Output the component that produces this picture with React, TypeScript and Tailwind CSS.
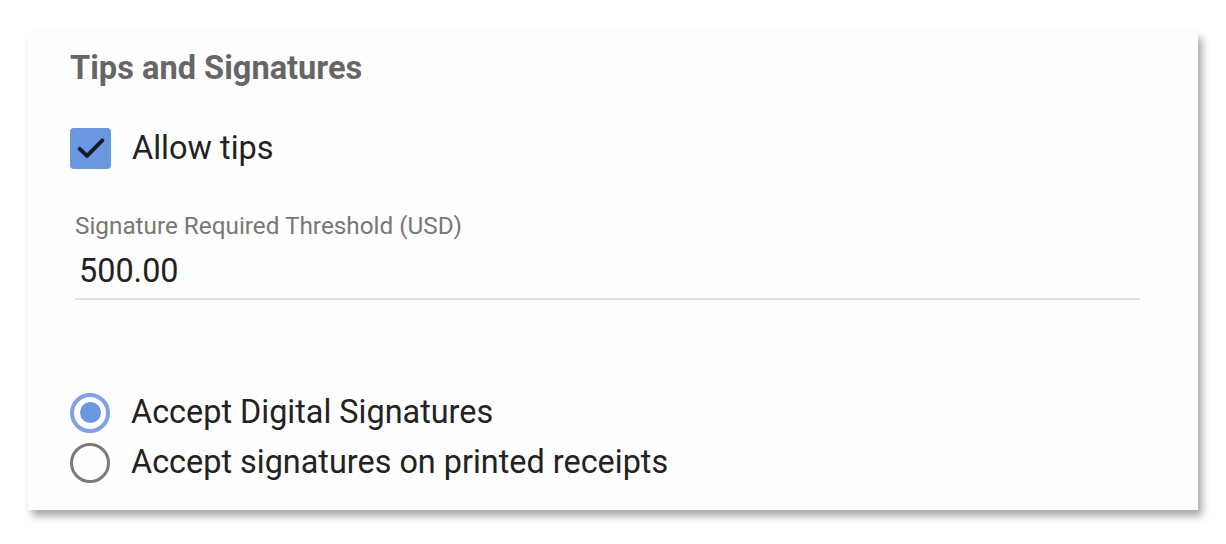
import React from 'react'

const Radio = ({ checked, label }: { checked?: boolean; label: string }) => (
  <label className="flex items-center gap-[21px] h-[50px]">
    <span
      className={
        checked
          ? 'flex items-center justify-center w-[40px] h-[40px] rounded-full border-[4px] border-[#7fa3e2]'
          : 'flex items-center justify-center w-[40px] h-[40px] rounded-full border-[3px] border-[#7a7a7a]'
      }
    >
      {checked && <span className="block w-[21px] h-[21px] rounded-full bg-[#6b97df]" />}
    </span>
    <span className="text-[32.4px] text-[#222]">{label}</span>
  </label>
)

export default function App() {
  return (
    <div className="w-[1226px] h-[544px] bg-white pt-[32px] pl-[28px] font-['Roboto',sans-serif]">
      <div className="w-[1170px] h-[478px] bg-[#fefefe] shadow-[4px_6px_8px_rgba(0,0,0,0.35)] pl-[42px] pt-[16px]">
        {/* section title */}
        <h2 className="text-[32.6px] leading-[40px] font-bold text-[#666]">Tips and Signatures</h2>

        <label className="flex items-center gap-[21px] mt-[36px]">
          <span className="flex items-center justify-center w-[41px] h-[41px] rounded-[4px] bg-[#6b97df]">
            <svg width="34" height="34" viewBox="0 0 24 24" fill="none">
              <path d="M4 12.6 L9.2 17.6 L20 6.6" stroke="#161b2b" strokeWidth="2.8" strokeLinecap="round" strokeLinejoin="round" />
            </svg>
          </span>
          <span className="text-[32.5px] text-[#222]">Allow tips</span>
        </label>

        {/* threshold input */}
        <div className="ml-[5px] mr-[58px] mt-[38px]">
          <div className="text-[24.3px] leading-[30px] text-[#777]">Signature Required Threshold (USD)</div>
          <div className="mt-[11px] pl-[4px] text-[32.4px] leading-[38px] text-[#222] pb-[8px] border-b-[2px] border-[#e0e0e0]">500.00</div>
        </div>

        <div className="mt-[88px] flex flex-col">
          <Radio checked label="Accept Digital Signatures" />
          <Radio label="Accept signatures on printed receipts" />
        </div>
      </div>
    </div>
  )
}
